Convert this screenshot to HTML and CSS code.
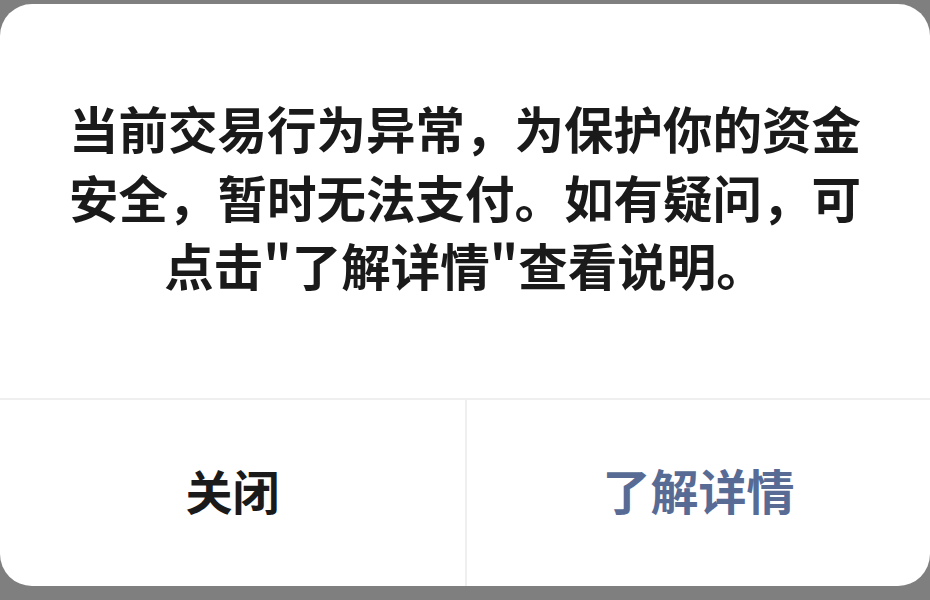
FILE: index.html
```html
<!DOCTYPE html>
<html lang="zh-CN">
<head>
    <meta charset="UTF-8">
    <meta name="viewport" content="width=device-width, initial-scale=1.0">
    <title>支付提示</title>
    <link rel="stylesheet" href="styles.css">
</head>
<body>
    <div class="dialog">
        <div class="dialog-body">
            <p class="message">当前交易行为异常，为保护你的资金安全，暂时无法支付。如有疑问，可点击"了解详情"查看说明。</p>
        </div>
        <div class="dialog-actions">
            <button class="action">关闭</button>
            <button class="action action-primary">了解详情</button>
        </div>
    </div>
</body>
</html>
```

FILE: styles.css
```css
body {
    margin: 0;
    padding: 4px 0 0;
    background-color: #7f7f7f;
    font-family: 'Noto Sans CJK SC', 'Noto Sans', sans-serif;
    height: 600px;
    box-sizing: border-box;
    overflow: hidden;
}

.dialog {
    width: 930px;
    height: 582px;
    background-color: #fff;
    border-radius: 32px;
    display: flex;
    flex-direction: column;
    overflow: hidden;
}

.dialog-body {
    height: 396px;
    display: flex;
    align-items: center;
    justify-content: center;
    padding: 0 60px 8px;
    border-bottom: 2px solid #efefef;
    box-sizing: border-box;
}

.message {
    margin: 0;
    font-size: 49.5px;
    line-height: 68.5px;
    font-weight: 700;
    color: #1a1a1a;
    text-align: center;
}

.dialog-actions {
    flex: 1;
    display: flex;
}

.action {
    flex: 0 0 465px;
    border: none;
    background: none;
    font-family: inherit;
    font-size: 47px;
    font-weight: 700;
    color: #1a1a1a;
    padding: 0 0 8px;
    cursor: pointer;
}

.action + .action {
    flex: 1;
    border-left: 2px solid #efefef;
}

.action-primary {
    color: #576b95;
    font-size: 48px;
}
```
